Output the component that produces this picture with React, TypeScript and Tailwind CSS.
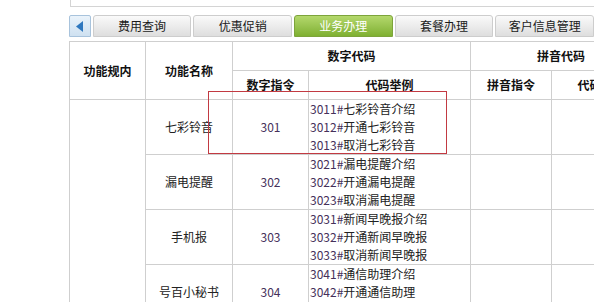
import React from 'react';

const tabs = ['费用查询', '优惠促销', '业务办理', '套餐办理', '客户信息管理'];

const rows = [
  { name: '七彩铃音', code: '301', items: ['3011#七彩铃音介绍', '3012#开通七彩铃音', '3013#取消七彩铃音'] },
  { name: '漏电提醒', code: '302', items: ['3021#漏电提醒介绍', '3022#开通漏电提醒', '3023#取消漏电提醒'] },
  { name: '手机报', code: '303', items: ['3031#新闻早晚报介绍', '3032#开通新闻早晚报', '3033#取消新闻早晚报'] },
  { name: '号百小秘书', code: '304', items: ['3041#通信助理介绍', '3042#开通通信助理', '3043#取消通信助理'] },
];

function CodeLine({ text }: { text: string }) {
  const [num, rest] = text.split('#');
  return (
    <div className="leading-[18px] whitespace-nowrap">
      <span className="text-[#45305a]">{num}#</span>
      {rest}
    </div>
  );
}

export default function App() {
  const cell = 'border border-[#cfcfcf]';
  const head = `${cell} font-bold text-[12px] text-[#111] text-center`;

  return (
    <div
      className="relative w-[594px] h-[302px] overflow-hidden bg-white text-[#222] text-[12px]"
      style={{ fontFamily: '"Noto Sans CJK SC", "Noto Sans", sans-serif' }}
    >
      <div className="ml-[70px] h-[7px] border-l border-b border-[#d4d4d4]" />

      <div className="flex ml-[69px] mt-[8px] h-[22px] gap-[2px]">
        <div className="w-[22px] flex items-center justify-center bg-gradient-to-b from-[#eaf3fb] to-[#cfe1f1] border border-[#a8c3dc] rounded-t-[2px]">
          <svg width="8" height="11" viewBox="0 0 8 11">
            <path d="M7 0 L0 5.5 L7 11 Z" fill="#2f78bf" />
          </svg>
        </div>
        {tabs.map((t) => {
          const active = t === '业务办理';
          return (
            <div
              key={t}
              className={
                active
                  ? 'w-[100px] flex items-center justify-center rounded-t-[3px] border border-[#7da43b] bg-gradient-to-b from-[#b4d86c] to-[#7fb030] text-white'
                  : 'w-[100px] flex items-center justify-center rounded-t-[3px] border border-[#cdcdcd] bg-gradient-to-b from-[#fafafa] to-[#dedede] text-[#1a1a1a]'
              }
            >
              {t}
            </div>
          );
        })}
      </div>

      <table className="ml-[69px] mt-[4px] border-collapse table-fixed w-[582px]">
        <colgroup>
          <col className="w-[76px]" />
          <col className="w-[87px]" />
          <col className="w-[76px]" />
          <col className="w-[162px]" />
          <col className="w-[81px]" />
          <col className="w-[100px]" />
        </colgroup>
        <thead>
          <tr className="h-[29px]">
            <th rowSpan={2} className={head}>功能规内</th>
            <th rowSpan={2} className={head}>功能名称</th>
            <th colSpan={2} className={head}>数字代码</th>
            <th colSpan={2} className={head}>拼音代码</th>
          </tr>
          <tr className="h-[29px]">
            <th className={head}>数字指令</th>
            <th className={head}>代码举例</th>
            <th className={head}>拼音指令</th>
            <th className={head}>代码举例</th>
          </tr>
        </thead>
        <tbody>
          {rows.map((r, i) => (
            <tr key={r.code} className="h-[55px]">
              {i === 0 && <td rowSpan={rows.length} className={cell} />}
              <td className={`${cell} text-center`}>{r.name}</td>
              <td className={`${cell} text-center text-[#45305a]`}>{r.code}</td>
              <td className={`${cell} pl-[1px] align-middle`}>
                {r.items.map((it) => (
                  <CodeLine key={it} text={it} />
                ))}
              </td>
              <td className={cell} />
              <td className={cell} />
            </tr>
          ))}
        </tbody>
      </table>

      <div className="absolute left-[208px] top-[91px] w-[239px] h-[63px] border border-[#c23a42]" />
    </div>
  );
}
